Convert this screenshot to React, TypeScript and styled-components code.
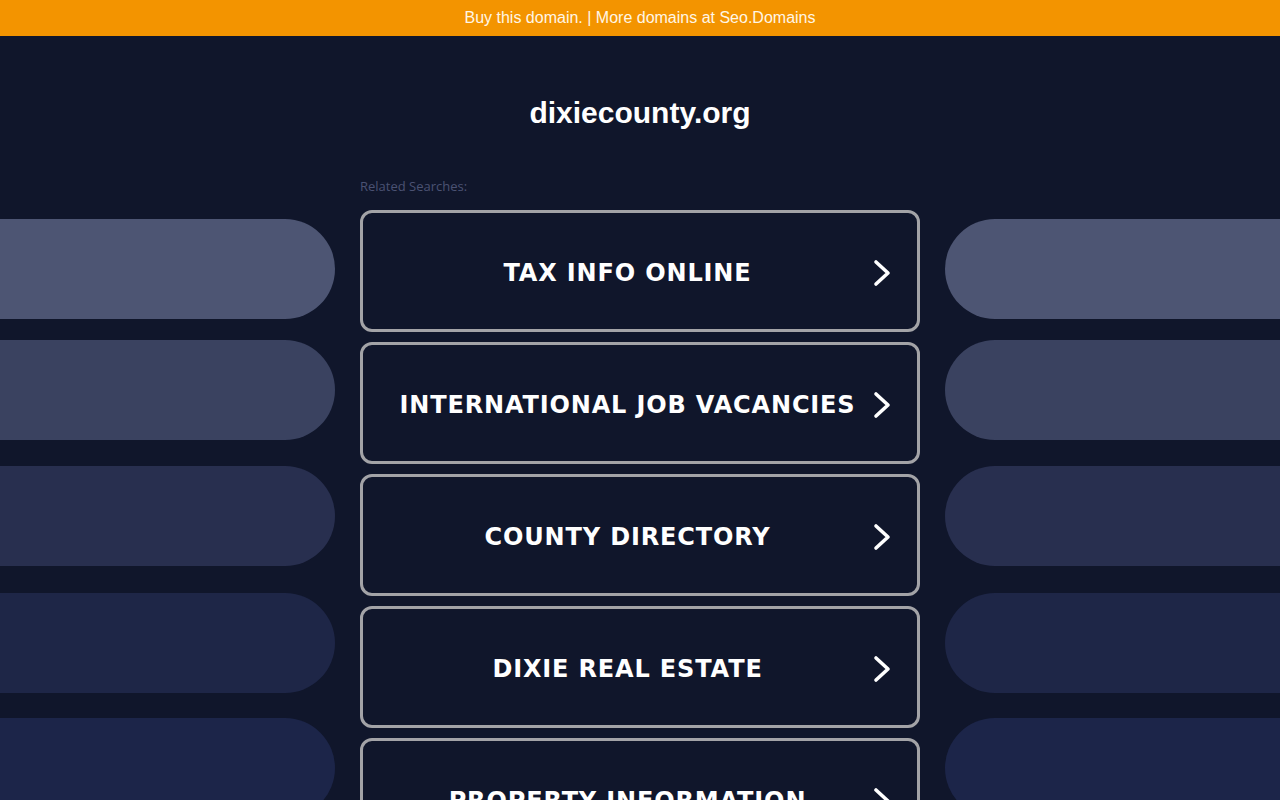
import React from 'react'
import styled, { createGlobalStyle } from 'styled-components'

const GlobalStyle = createGlobalStyle`
  html, body {
    margin: 0;
    padding: 0;
    background: #10162b;
    height: 100%;
    overflow: hidden;
  }
  * {
    box-sizing: border-box;
  }
`

const Page = styled.div`
  width: 1280px;
  height: 800px;
  background: #10162b;
  overflow: hidden;
`

const TopBar = styled.div`
  height: 36px;
  background: #f39400;
  display: flex;
  align-items: center;
  justify-content: center;
  font-family: 'Liberation Sans', Arial, sans-serif;
  font-size: 16px;
  color: #fff6e6;
`

const Title = styled.h1`
  margin: 0;
  padding-top: 59px;
  height: 142px;
  text-align: center;
  font-family: 'Liberation Sans', Arial, sans-serif;
  font-weight: 700;
  font-size: 30px;
  line-height: 36px;
  color: #ffffff;
`

const Main = styled.div`
  display: grid;
  grid-template-columns: 335px 560px 335px;
  column-gap: 25px;
`

const PillColumn = styled.div`
  display: flex;
  flex-direction: column;
  padding-top: 41px;
`

const Pill = styled.div<{ $color: string; $side: 'left' | 'right'; $space: number }>`
  height: 100px;
  flex: none;
  margin-top: ${p => p.$space}px;
  background: ${p => p.$color};
  border-radius: ${p => (p.$side === 'left' ? '0 50px 50px 0' : '50px 0 0 50px')};
`

const Center = styled.div`
  display: flex;
  flex-direction: column;
`

const Label = styled.div`
  font-family: 'Open Sans', 'Noto Sans', sans-serif;
  font-size: 13px;
  line-height: 16px;
  color: #4b5273;
  height: 32px;
  padding-top: 0;
`

const List = styled.div`
  display: flex;
  flex-direction: column;
  gap: 10px;
`

const SearchButton = styled.a`
  display: flex;
  align-items: center;
  flex: none;
  height: 122px;
  border: 3px solid #a3a3a7;
  border-radius: 12px;
  padding-right: 26px;
  padding-top: 3px;
  text-decoration: none;
  cursor: pointer;
`

const ButtonText = styled.span`
  flex: 1;
  margin-right: -19px;
  text-align: center;
  font-family: 'DejaVu Sans', Verdana, sans-serif;
  font-weight: 700;
  font-size: 24px;
  letter-spacing: 0.85px;
  color: #ffffff;
  white-space: nowrap;
`

const Arrow = styled.svg`
  width: 18px;
  height: 28px;
  flex: none;
`

const pills = [
  { color: '#4d5573', space: 0 },
  { color: '#3a4260', space: 21 },
  { color: '#282f4f', space: 26 },
  { color: '#1e2647', space: 27 },
  { color: '#1c2549', space: 25 },
]

const searches = [
  'TAX INFO ONLINE',
  'INTERNATIONAL JOB VACANCIES',
  'COUNTY DIRECTORY',
  'DIXIE REAL ESTATE',
  'PROPERTY INFORMATION',
]

function Chevron() {
  return (
    <Arrow viewBox="0 0 18 28">
      <polyline
        points="3,3 15,14 3,25"
        fill="none"
        stroke="#ffffff"
        strokeWidth="3.6"
        strokeLinecap="round"
        strokeLinejoin="round"
      />
    </Arrow>
  )
}

export default function App() {
  return (
    <Page>
      <GlobalStyle />
      <TopBar>Buy this domain. | More domains at Seo.Domains</TopBar>
      <Title>dixiecounty.org</Title>
      <Main>
        <PillColumn>
          {pills.map(p => (
            <Pill key={p.color} $color={p.color} $space={p.space} $side="left" />
          ))}
        </PillColumn>
        <Center>
          <Label>Related Searches:</Label>
          <List>
            {searches.map(s => (
              <SearchButton key={s}>
                <ButtonText>{s}</ButtonText>
                <Chevron />
              </SearchButton>
            ))}
          </List>
        </Center>
        <PillColumn>
          {pills.map(p => (
            <Pill key={p.color} $color={p.color} $space={p.space} $side="right" />
          ))}
        </PillColumn>
      </Main>
    </Page>
  )
}
